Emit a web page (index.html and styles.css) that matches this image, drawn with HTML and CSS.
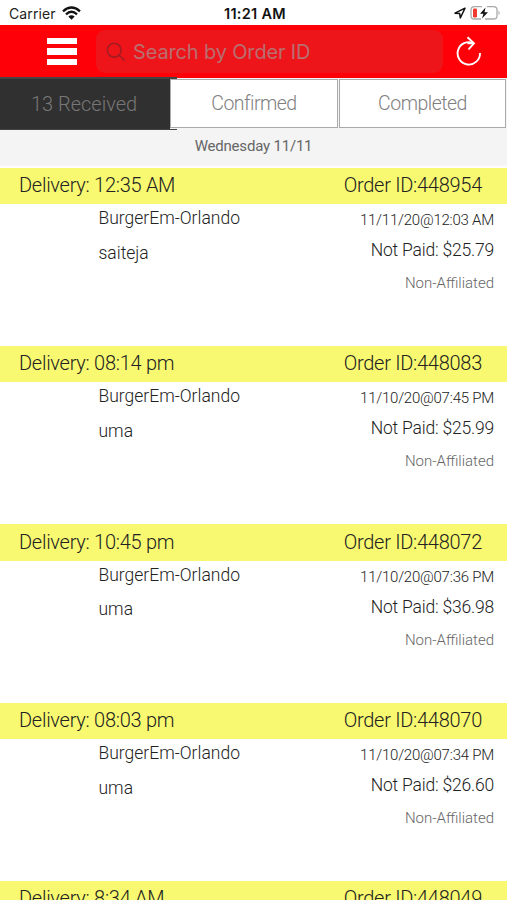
FILE: index.html
```html
<!DOCTYPE html>
<html lang="en">
<head>
<meta charset="utf-8">
<title>Orders</title>
<link rel="stylesheet" href="styles.css">
</head>
<body>
<div class="app">
  <div class="status">
    <div class="carrier"><span class="carrier-name">Carrier</span>
      <svg class="wifi" width="19" height="14" viewBox="0 0 19 14"><g fill="none" stroke="#111" stroke-width="2.3"><path d="M1 5.3Q9.500-2.300 18 5.300"/><path d="M4 8.300Q9.500 3.300 15 8.300"/></g><path d="M6.300 10.500Q9.500 7.900 12.700 10.500L9.500 13.700Z" fill="#111"/></svg>
    </div>
    <span class="clock">11:21 AM</span>
    <div class="power">
      <svg width="12" height="12" viewBox="0 0 12 12"><path d="M1 6.200 11 1.200 6.300 11 5.700 6.500Z" fill="none" stroke="#111" stroke-width="1.500" stroke-linejoin="round"/></svg>
      <svg width="31" height="16" viewBox="0 0 31 16"><path d="M12 1.700H4.500Q1 1.700 1 5V10.700Q1 14 4.500 14H11M17 1.700H23.500Q27 1.700 27 5V10.700Q27 14 23.500 14H15" fill="none" stroke="#aaa" stroke-width="1.300"/><path d="M28.500 5.500Q31 7.800 28.500 10Z" fill="#aaa"/><rect x="3" y="3.500" width="4" height="9" rx="1.300" fill="#f23b30"/><path d="M15.500 2.500 10 8.700H13.500L12 13.500 18 7.200H14.500Z" fill="#111"/></svg>
    </div>
  </div>
  <header class="bar">
    <div class="menu"><i></i><i></i><i></i></div>
    <div class="search">
      <svg width="20" height="20" viewBox="0 0 20 20" fill="none" stroke="#a31c20" stroke-width="1.600"><circle cx="8.200" cy="8.200" r="6.900"/><path d="M13.200 13.200 18.800 18.800"/></svg>
      <span class="placeholder">Search by Order ID</span>
    </div>
    <svg class="refresh" width="26" height="32" viewBox="0 0 26 32" fill="none" stroke="#fff" stroke-width="1.900"><path d="M24 17A11.200 11.200 0 1 1 17.500 7.200H11.500"/><path d="M11.500 1.200 18 7.200 12.500 13.500"/></svg>
  </header>
  <nav class="tabs">
    <div class="tab tab-active"><span>13 Received</span></div>
    <div class="tab"><span>Confirmed</span></div>
    <div class="tab"><span>Completed</span></div>
  </nav>
  <div class="date"><span>Wednesday 11/11</span></div>
  <main class="orders">
    <section class="order">
      <div class="head"><span>Delivery: 12:35 AM</span><span>Order ID:448954</span></div>
      <div class="body"><div class="left"><span>BurgerEm-Orlando</span><span>saiteja</span></div><div class="right"><span class="time">11/11/20@12:03 AM</span><span class="paid">Not Paid: $25.79</span><span class="aff">Non-Affiliated</span></div></div>
    </section>
    <section class="order">
      <div class="head"><span>Delivery: 08:14 pm</span><span>Order ID:448083</span></div>
      <div class="body"><div class="left"><span>BurgerEm-Orlando</span><span>uma</span></div><div class="right"><span class="time">11/10/20@07:45 PM</span><span class="paid">Not Paid: $25.99</span><span class="aff">Non-Affiliated</span></div></div>
    </section>
    <section class="order">
      <div class="head"><span>Delivery: 10:45 pm</span><span>Order ID:448072</span></div>
      <div class="body"><div class="left"><span>BurgerEm-Orlando</span><span>uma</span></div><div class="right"><span class="time">11/10/20@07:36 PM</span><span class="paid">Not Paid: $36.98</span><span class="aff">Non-Affiliated</span></div></div>
    </section>
    <section class="order">
      <div class="head"><span>Delivery: 08:03 pm</span><span>Order ID:448070</span></div>
      <div class="body"><div class="left"><span>BurgerEm-Orlando</span><span>uma</span></div><div class="right"><span class="time">11/10/20@07:34 PM</span><span class="paid">Not Paid: $26.60</span><span class="aff">Non-Affiliated</span></div></div>
    </section>
    <section class="order">
      <div class="head"><span>Delivery: 8:34 AM</span><span>Order ID:448049</span></div>
    </section>
  </main>
</div>
</body>
</html>
```
FILE: styles.css
```css
* { box-sizing: border-box; }
body { margin: 0; background: #fff; font-family: Roboto, sans-serif; font-weight: 300; }
span { white-space: nowrap; }
svg { display: block; flex: none; }
.app { height: 900px; overflow: hidden; display: flex; flex-direction: column; }
.status { height: 25px; flex: none; display: grid; grid-template-columns: 1fr auto 1fr; align-items: center; padding: 2px 6px 0 9px; font-family: Inter, sans-serif; font-size: 14px; line-height: 20px; color: #222; }
.carrier { display: flex; align-items: center; gap: 6px; font-weight: 400; letter-spacing: 0.1px; }
.wifi { margin-top: -2px; }
.clock { font-weight: 600; font-size: 14.500px; letter-spacing: 0.300px; color: #111; }
.power { display: flex; align-items: center; justify-content: flex-end; gap: 4px; margin-top: -2px; }
.bar { height: 53px; flex: none; background: #fe0008; display: flex; align-items: center; padding: 0 25px 0 47px; }
.menu { width: 30px; display: flex; flex-direction: column; gap: 4px; margin-right: 19px; }
.menu i { height: 6.300px; background: #fff; }
.search { width: 347px; height: 43px; border-radius: 9px; background: #ee151a; display: flex; align-items: center; padding-left: 10px; gap: 7px; margin-right: 13px; }
.placeholder { font-family: Inter, sans-serif; font-weight: 400; font-size: 20px; letter-spacing: -0.150px; color: #b96e70; }
.tabs { height: 52px; flex: none; display: grid; grid-template-columns: 170px 168px 168px; column-gap: 0; background: #f4f4f5; position: relative; }
.tab { height: 49px; margin-top: 1px; border: 1px solid #aaa; background: #fff; display: flex; align-items: center; justify-content: center; font-size: 19.500px; letter-spacing: -0.500px; color: #808080; }
.tab:last-child { margin-left: 1px; }
.tab-active { height: 52px; margin-top: 0; padding: 0 2px 1px 0; border: 0; background: #303030; color: #777; font-size: 20px; letter-spacing: 0; }
.tab-active::before, .tab-active::after { content: ""; position: absolute; left: 0; width: 177px; height: 1.500px; background: #444; }
.tab-active::before { top: -1px; }
.tab-active::after { bottom: 0; }
.date { height: 37px; flex: none; display: flex; align-items: center; justify-content: center; background: #f4f4f5; border-bottom: 2px solid #fcf8f8; padding-bottom: 3px; font-size: 15px; letter-spacing: -0.200px; color: #666; font-weight: 400; }
.orders { flex: 1; min-height: 0; padding-top: 0.500px; }
.order { height: 178.400px; color: #222; }
.head { height: 36.500px; background: #f8f970; display: flex; justify-content: space-between; align-items: center; padding: 0 25px 2px 19px; font-size: 20px; letter-spacing: -0.270px; }
.body { display: flex; justify-content: space-between; padding: 4px 13px 0 98.500px; }
.left { display: flex; flex-direction: column; gap: 14.500px; font-size: 17.500px; line-height: 20px; }
.right { display: flex; flex-direction: column; align-items: flex-end; line-height: 20px; }
.time { font-size: 15px; letter-spacing: -0.230px; margin-top: 2px; }
.paid { font-size: 17.500px; letter-spacing: -0.200px; margin-top: 10px; }
.aff { font-size: 15px; margin-top: 13px; color: #666; }
```
